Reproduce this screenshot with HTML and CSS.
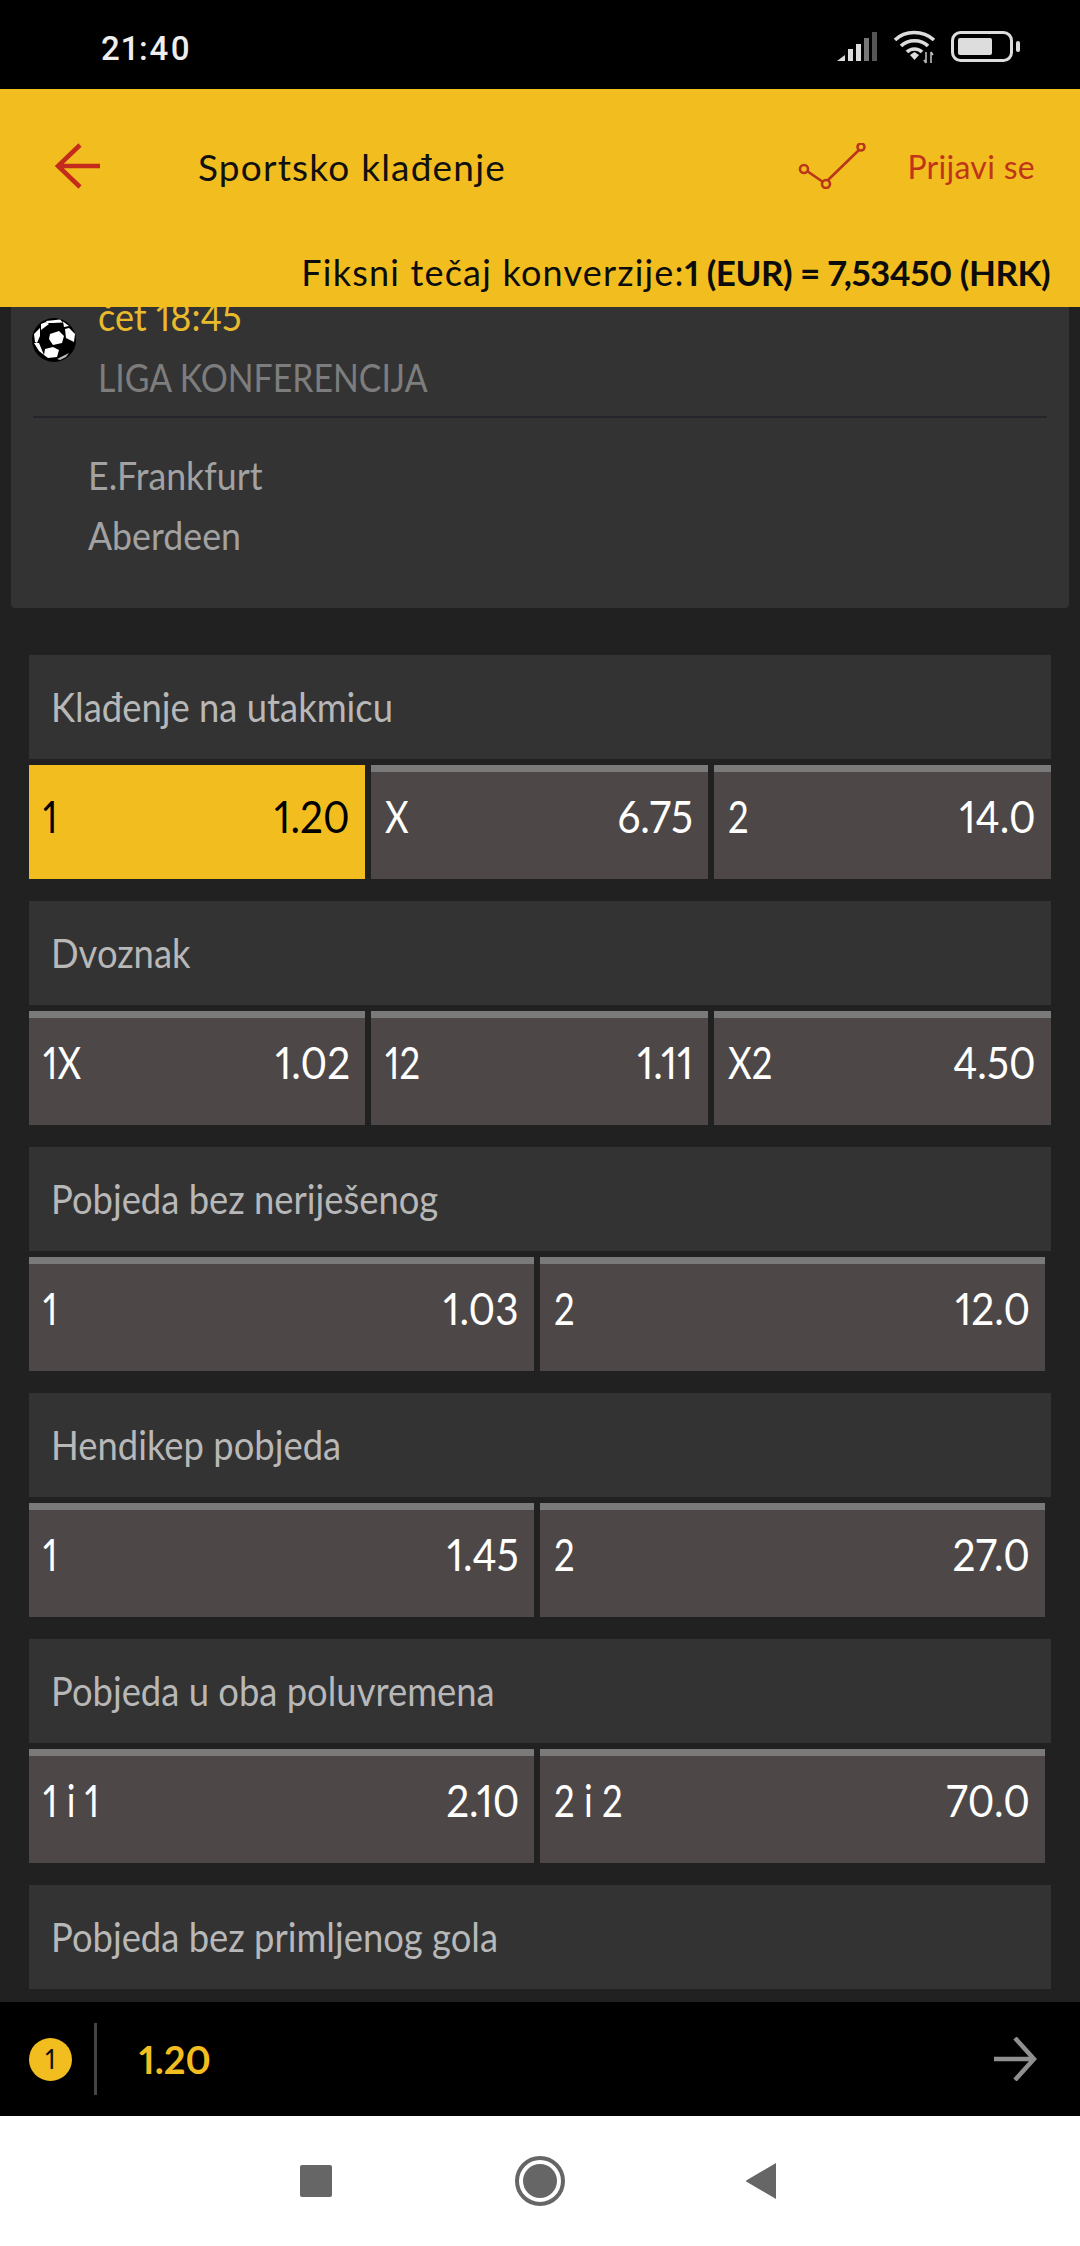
FILE: index.html
```html
<!DOCTYPE html>
<html lang="hr">
<head>
<meta charset="utf-8">
<title>Sportsko klađenje</title>
<link rel="stylesheet" href="styles.css">
</head>
<body>
<div class="phone">
  <div class="status">
    <span class="time">21:40</span>
    <div class="status-icons">
      <svg class="sig" width="42" height="30" viewBox="0 0 42 30"><path d="M0 29 8 23V29Z" fill="#ddd"/><rect x="11" y="17" width="5" height="12" fill="#ddd"/><rect x="19" y="12" width="5" height="17" fill="#ddd"/><rect x="27" y="6" width="5" height="23" fill="#777"/><rect x="35" y="0" width="5" height="29" fill="#555"/></svg>
      <svg class="wifi" width="44" height="34" viewBox="0 0 44 34"><g fill="none" stroke="#ddd" stroke-width="3.6"><path d="M2 10C12 0 30 0 41 10"/><path d="M8 16C15 9 28 9 35 16"/><path d="M14 22C18 18 25 18 29 22"/></g><path d="M17 25 21.500 22 26 25 21.500 30Z" fill="#ddd"/><path d="M33 22V33M33 33l-2-3M38 33V22M38 22l2 3" fill="none" stroke="#bbb" stroke-width="1.600"/></svg>
      <svg class="batt" width="70" height="32" viewBox="0 0 70 32"><rect x="1.500" y="1.500" width="59" height="28" rx="8" fill="none" stroke="#ddd" stroke-width="3"/><rect x="7" y="7" width="34" height="17" rx="2" fill="#ddd"/><rect x="65" y="10" width="4" height="11" rx="2" fill="#ddd"/></svg>
    </div>
  </div>

  <header class="topbar">
    <div class="nav-row">
      <svg class="back" width="48" height="46" viewBox="0 0 48 46"><path d="M26 2 4 23 26 44M4 23H46" fill="none" stroke="#c42b1c" stroke-width="4.500"/></svg>
      <span class="title">Sportsko klađenje</span>
      <svg class="graph" width="72" height="46" viewBox="0 0 72 46"><path d="M12 28 28 39M33 37 64 7" fill="none" stroke="#b9361a" stroke-width="2.600"/><circle cx="9" cy="26" r="4" fill="none" stroke="#b9361a" stroke-width="2.600"/><circle cx="31" cy="41" r="4" fill="none" stroke="#b9361a" stroke-width="2.600"/><circle cx="66" cy="4" r="3.500" fill="none" stroke="#b9361a" stroke-width="2.600"/></svg>
      <span class="login">Prijavi se</span>
    </div>
    <div class="rate">Fiksni tečaj konverzije:<b>1 (EUR) = 7,53450 (HRK)</b></div>
  </header>

  <main class="content">
    <section class="event">
      <div class="event-head">
        <svg class="ball" width="44" height="44" viewBox="0 0 44 44">
          <circle cx="22" cy="22" r="22" fill="#000"/>
          <path d="M14 3 28 1.500 31 4.500 21 5 15 5Z" fill="#fff"/>
          <path d="M31 3.500 37 8 32 9Z" fill="#fff"/>
          <path d="M9 6 14 4 17 6 9 12Z" fill="#fff"/>
          <path d="M18 16 27 13 32 18 30 25 21 27 17 21Z" fill="#fff"/>
          <path d="M33 11 37 10 43 16 42 24 34 20Z" fill="#fff"/>
          <path d="M13 31 21 29 27 32 25 39 16 40 12 37Z" fill="#fff"/>
          <path d="M2 16 8 10 8 18 5 25 3 24Z" fill="#fff"/>
          <path d="M2 25 7 25 12 37 7 33Z" fill="#fff"/>
          <path d="M25 41 37 35 34 39 28 42Z" fill="#bbb"/>
        </svg>
        <div class="event-info">
          <div class="when"><span class="sq">čet 18:45</span></div>
          <div class="league"><span class="sq">LIGA KONFERENCIJA</span></div>
        </div>
      </div>
      <div class="teams">
        <div class="team"><span class="sq">E.Frankfurt</span></div>
        <div class="team"><span class="sq">Aberdeen</span></div>
      </div>
    </section>

    <section class="market">
      <h2 class="market-title"><span class="sq">Klađenje na utakmicu</span></h2>
      <div class="odds three">
        <div class="odd active"><span class="sq lab">1</span><span class="sq-r val">1.20</span></div>
        <div class="odd"><span class="sq lab">X</span><span class="sq-r val">6.75</span></div>
        <div class="odd"><span class="sq lab">2</span><span class="sq-r val">14.0</span></div>
      </div>
    </section>

    <section class="market">
      <h2 class="market-title"><span class="sq">Dvoznak</span></h2>
      <div class="odds three">
        <div class="odd"><span class="sq lab">1X</span><span class="sq-r val">1.02</span></div>
        <div class="odd"><span class="sq lab">12</span><span class="sq-r val">1.11</span></div>
        <div class="odd"><span class="sq lab">X2</span><span class="sq-r val">4.50</span></div>
      </div>
    </section>

    <section class="market">
      <h2 class="market-title"><span class="sq">Pobjeda bez neriješenog</span></h2>
      <div class="odds two">
        <div class="odd"><span class="sq lab">1</span><span class="sq-r val">1.03</span></div>
        <div class="odd"><span class="sq lab">2</span><span class="sq-r val">12.0</span></div>
      </div>
    </section>

    <section class="market">
      <h2 class="market-title"><span class="sq">Hendikep pobjeda</span></h2>
      <div class="odds two">
        <div class="odd"><span class="sq lab">1</span><span class="sq-r val">1.45</span></div>
        <div class="odd"><span class="sq lab">2</span><span class="sq-r val">27.0</span></div>
      </div>
    </section>

    <section class="market">
      <h2 class="market-title"><span class="sq">Pobjeda u oba poluvremena</span></h2>
      <div class="odds two">
        <div class="odd"><span class="sq lab">1 i 1</span><span class="sq-r val">2.10</span></div>
        <div class="odd"><span class="sq lab">2 i 2</span><span class="sq-r val">70.0</span></div>
      </div>
    </section>

    <section class="market">
      <h2 class="market-title"><span class="sq">Pobjeda bez primljenog gola</span></h2>
    </section>
  </main>

  <div class="slip">
    <span class="count">1</span>
    <span class="slip-sep"></span>
    <span class="slip-odd">1.20</span>
    <svg class="next" width="46" height="44" viewBox="0 0 46 44"><path d="M24 1 43 22 24 43M43 22H3" fill="none" stroke="#8f8f8f" stroke-width="4.500"/></svg>
  </div>

  <nav class="sysnav">
    <span class="sys-square"></span>
    <span class="sys-home"></span>
    <svg class="sys-back" width="32" height="38" viewBox="0 0 32 38"><path d="M31 1V37L2 20Q0 19 2 18Z" fill="#666"/></svg>
  </nav>
</div>
</body>
</html>
```

FILE: styles.css
```css
* { box-sizing: border-box; }
html, body { margin: 0; padding: 0; background: #212121; }
body { font-family: Lato, "Liberation Sans", sans-serif; font-variant-numeric: proportional-nums; }

.phone { width: 1080px; height: 2246px; display: flex; flex-direction: column; overflow: hidden; }

/* status bar */
.status { height: 89px; flex: none; background: #000; display: flex; align-items: center; padding: 6px 59px 0 101px; justify-content: space-between; }
.time { font-family: Roboto, sans-serif; font-weight: 500; font-size: 33px; letter-spacing: 2px; color: #eee; position: relative; top: 1px; }
.status-icons { display: flex; align-items: center; margin-top: -2px; }
.sig { margin-right: 14px; }
.wifi { margin-right: 14px; }

/* yellow header */
.topbar { height: 218px; flex: none; background: #f2be1f; display: flex; flex-direction: column; }
.nav-row { height: 154px; display: flex; align-items: center; padding: 0 45px 0 54px; }
.back { flex: none; }
.title { margin-left: 96px; font-size: 37px; letter-spacing: 1.2px; color: #111; flex: 1; }
.graph { flex: none; margin-right: 40px; }
.login { font-size: 32px; letter-spacing: .3px; color: #c0351a; }
.rate { text-align: right; padding-right: 30px; font-size: 36px; letter-spacing: 1.2px; line-height: 64px; color: #0c0c0c; margin-top: -3px; white-space: nowrap; }
.rate b { font-weight: 700; font-size: 35px; letter-spacing: -.5px; }

/* scrolled content */
.content { flex: 1; min-height: 0; overflow: hidden; background: #212121; }

.sq, .sq-r { display: inline-block; white-space: pre; transform: scaleX(.82); }
.sq { transform-origin: left center; }
.sq-r { transform-origin: right center; }

.event { margin: -40px 11px 0; height: 341px; background: #333; padding: 0 22px; border-radius: 0 0 4px 4px; }
.event-head { height: 151px; display: flex; border-bottom: 2px solid #23252b; padding-top: 19px; }
.ball { flex: none; margin-top: 32px; margin-right: 22px; margin-left: -1px; }
.when { font-size: 38px; line-height: 61px; color: #e8ba2c; }
.when .sq { transform: scaleX(.95); }
.league { font-size: 38px; line-height: 60px; color: #7d7d7d; }
.league .sq { transform: scaleX(.89); }
.teams { padding: 27px 0 0 55px; }
.team { font-size: 38px; line-height: 60px; color: #a2a2a2; }
.team .sq { transform: scaleX(.94); }

.market { margin: 0 29px 22px; }
.event + .market { margin-top: 47px; }
.market-title { margin: 0 0 6px; height: 104px; background: #333; padding-left: 22px; display: flex; align-items: center; font-weight: 400; font-size: 40px; color: #b8b8b8; }
.market-title .sq { transform: scaleX(.91); }

.odds { display: grid; gap: 6px; }
.three { grid-template-columns: 336px 337px 337px; }
.two { grid-template-columns: repeat(2, 1fr); padding-right: 6px; }
.odd { height: 114px; background: #4d4847; border-top: 7px solid #7a7a7a; display: flex; justify-content: space-between; align-items: center; padding: 0 15px 20px 14px; font-size: 45px; color: #fff; }
.odd.active { background: #f2be1f; border-top-color: #f2be1f; color: #000; }
.val { transform: scaleX(.9); }
.lab { transform: scaleX(.81); }

/* bet slip */
.slip { height: 114px; flex: none; background: #000; display: flex; align-items: center; padding: 0 43px 0 29px; }
.count { width: 43px; height: 43px; border-radius: 50%; background: #f2be1f; color: #111; font-size: 26px; display: flex; align-items: center; justify-content: center; flex: none; }
.slip-sep { width: 3px; height: 72px; background: #444; margin: 0 42px 0 22px; flex: none; }
.slip-odd { font-size: 38px; font-weight: 700; color: #f2be1f; flex: 1; }
.next { flex: none; }

/* system nav */
.sysnav { height: 130px; flex: none; background: #fff; display: flex; align-items: center; padding: 0 0 0 300px; }
.sys-square { width: 32px; height: 32px; border-radius: 2px; background: #666; flex: none; }
.sys-home { width: 50px; height: 50px; border-radius: 50%; border: 4px solid #666; padding: 4px; background: #666; background-clip: content-box; margin-left: 183px; flex: none; }
.sys-back { margin-left: 180px; flex: none; }
```
